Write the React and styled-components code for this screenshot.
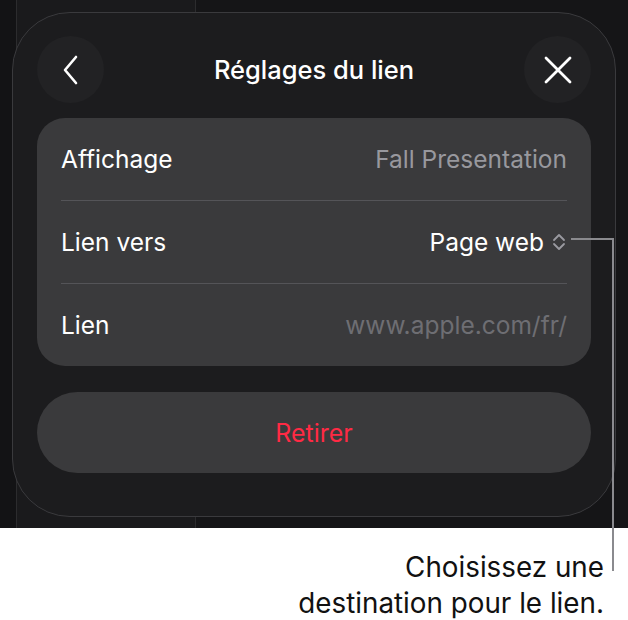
import { createGlobalStyle, styled } from "styled-components";

const GlobalStyle = createGlobalStyle`
    html, body {
        margin: 0;
        background: #ffffff;
        font-family: Inter, "Noto Sans", "DejaVu Sans", sans-serif;
    }
`

const ChevronLeft = () => (
    <svg width="20" height="30" viewBox="0 0 20 30" fill="none">
        <path d="M15 2 L4 15 L15 28" stroke="#fff" strokeWidth="2.6" strokeLinecap="round" strokeLinejoin="round"/>
    </svg>
)

const CloseIcon = () => (
    <svg width="30" height="30" viewBox="0 0 30 30" fill="none">
        <path d="M3 3 L27 27 M27 3 L3 27" stroke="#fff" strokeWidth="2.8" strokeLinecap="round"/>
    </svg>
)

const UpDown = () => (
    <svg width="16" height="18" viewBox="0 0 16 18" fill="none">
        <path d="M3 7 L8 2 L13 7 M3 11 L8 16 L13 11" stroke="#9a9aa0" strokeWidth="1.8" strokeLinecap="round" strokeLinejoin="round"/>
    </svg>
)

const App = () => {
    return <Page>
        <GlobalStyle/>
        <Stage>
            <Sheet>
                <Header>
                    <RoundButton aria-label="Retour"><ChevronLeft/></RoundButton>
                    <Title>Réglages du lien</Title>
                    <RoundButton aria-label="Fermer"><CloseIcon/></RoundButton>
                </Header>
                <Card>
                    <Row>
                        <Label>Affichage</Label>
                        <Value $tone="muted">Fall Presentation</Value>
                    </Row>
                    <Row>
                        <Label>Lien vers</Label>
                        <Value $tone="bright">Page web <UpDown/></Value>
                    </Row>
                    <Row>
                        <Label>Lien</Label>
                        <Value $tone="dim">www.apple.com/fr/</Value>
                    </Row>
                </Card>
                <RemoveButton>Retirer</RemoveButton>
            </Sheet>
        </Stage>
        <Caption>
            Choisissez une<br/>destination pour le lien.
        </Caption>
        <LeaderH/>
        <LeaderV/>
    </Page>;
}

export default App;

const Page = styled.div`
    position: relative;
    width: 628px;
    height: 620px;
    overflow: hidden;
`

const Stage = styled.div`
    height: 528px;
    box-sizing: border-box;
    padding: 12px 12px 11px 12px;
    background:
        linear-gradient(to right,
            #131315 0, #131315 16px,
            #2c2c2e 16px, #2c2c2e 17px,
            #1a1a1c 17px, #1a1a1c 195px,
            #2c2c2e 195px, #2c2c2e 196px,
            #151517 196px);
`

const Sheet = styled.div`
    height: 505px;
    box-sizing: border-box;
    background: #1c1c1e;
    border: 1px solid #3a3a3d;
    border-radius: 58px;
    padding: 23px 24px 0 24px;
    display: flex;
    flex-direction: column;
`

const Header = styled.div`
    display: flex;
    align-items: center;
    justify-content: space-between;
    height: 67px;
    margin-bottom: 15px;
`

const RoundButton = styled.button`
    width: 67px;
    height: 67px;
    border-radius: 50%;
    border: none;
    background: #222224;
    display: flex;
    align-items: center;
    justify-content: center;
    padding: 0;
`

const Title = styled.h1`
    margin: 0;
    color: #ffffff;
    font-size: 25.5px;
    font-weight: 500;
`

const Card = styled.div`
    background: #3a3a3c;
    border-radius: 28px;
    padding: 0 24px;
    height: 248px;
    box-sizing: border-box;
    display: flex;
    flex-direction: column;
`

const Row = styled.div`
    flex: 1;
    display: flex;
    align-items: center;
    justify-content: space-between;
    & + & {
        border-top: 1.5px solid #545458;
    }
`

const Label = styled.span`
    color: #ffffff;
    font-size: 24.5px;
`

const tones = {
    muted: "#98989e",
    bright: "#ffffff",
    dim: "#6e6e73",
}

const Value = styled.span`
    display: flex;
    align-items: center;
    gap: 7px;
    color: ${p => tones[p.$tone]};
    font-size: 24.5px;
`

const RemoveButton = styled.button`
    margin-top: 26px;
    height: 81px;
    border: none;
    border-radius: 41px;
    background: #3a3a3c;
    color: #ff2a44;
    font-family: inherit;
    font-size: 25px;
`

const Caption = styled.p`
    margin: 0;
    padding: 21px 24px 0 0;
    text-align: right;
    color: #111111;
    font-size: 27.8px;
    line-height: 36px;
`

const LeaderH = styled.div`
    position: absolute;
    left: 571px;
    top: 238px;
    width: 43px;
    height: 2px;
    background: #8a8a8e;
`

const LeaderV = styled.div`
    position: absolute;
    left: 612px;
    top: 238px;
    width: 2px;
    height: 333px;
    background: #8a8a8e;
`
